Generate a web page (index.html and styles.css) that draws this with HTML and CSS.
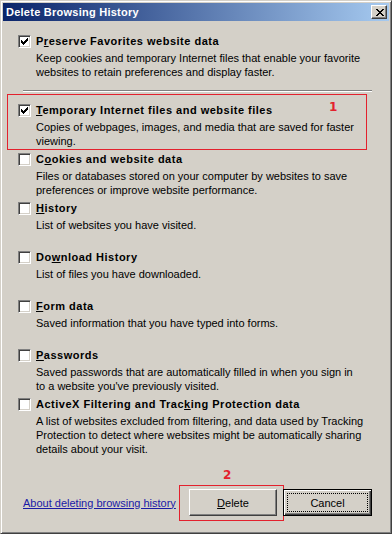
FILE: index.html
```html
<!DOCTYPE html>
<html lang="en">
<head>
  <meta charset="UTF-8">
  <title>Delete Browsing History</title>
  <link rel="stylesheet" href="styles.css">
</head>
<body>
  <div class="window">
    <div class="titlebar">
      <span class="title">Delete Browsing History</span>
      <span class="close-btn">
        <svg width="8" height="7" viewBox="0 0 8 7" shape-rendering="crispEdges">
          <path d="M0 0h2v1h-2zM6 0h2v1h-2zM1 1h2v1h-2zM5 1h2v1h-2zM2 2h4v1h-4zM3 3h2v1h-2zM2 4h4v1h-4zM1 5h2v1h-2zM5 5h2v1h-2zM0 6h2v1h-2zM6 6h2v1h-2z" fill="#000"/>
        </svg>
      </span>
    </div>

    <div class="content">
      <div class="item first">
        <span class="checkbox"><svg class="check" width="7" height="7" viewBox="0 0 7 7" shape-rendering="crispEdges"><path d="M6 0h1v3h-1v1h-1v1h-1v1h-1v1h-1v-1h-1v-1h-1v-3h1v1h1v1h1v-1h1v-1h1v-1h1z" fill="#000"/></svg></span>
        <div class="text">
          <div class="label">P<u>r</u>eserve Favorites website data</div>
          <div class="desc">Keep cookies and temporary Internet files that enable your favorite<br>websites to retain preferences and display faster.</div>
        </div>
      </div>

      <div class="separator"></div>

      <div class="item">
        <span class="checkbox"><svg class="check" width="7" height="7" viewBox="0 0 7 7" shape-rendering="crispEdges"><path d="M6 0h1v3h-1v1h-1v1h-1v1h-1v1h-1v-1h-1v-1h-1v-3h1v1h1v1h1v-1h1v-1h1v-1h1z" fill="#000"/></svg></span>
        <div class="text">
          <div class="label"><u>T</u>emporary Internet files and website files</div>
          <div class="desc">Copies of webpages, images, and media that are saved for faster<br>viewing.</div>
        </div>
        <span class="mark-box box-1"></span>
        <span class="mark-num num-1">1</span>
      </div>

      <div class="item">
        <span class="checkbox"></span>
        <div class="text">
          <div class="label">C<u>o</u>okies and website data</div>
          <div class="desc">Files or databases stored on your computer by websites to save<br>preferences or improve website performance.</div>
        </div>
      </div>

      <div class="item">
        <span class="checkbox"></span>
        <div class="text">
          <div class="label"><u>H</u>istory</div>
          <div class="desc">List of websites you have visited.</div>
        </div>
      </div>

      <div class="item">
        <span class="checkbox"></span>
        <div class="text">
          <div class="label">Do<u>w</u>nload History</div>
          <div class="desc">List of files you have downloaded.</div>
        </div>
      </div>

      <div class="item">
        <span class="checkbox"></span>
        <div class="text">
          <div class="label"><u>F</u>orm data</div>
          <div class="desc">Saved information that you have typed into forms.</div>
        </div>
      </div>

      <div class="item">
        <span class="checkbox"></span>
        <div class="text">
          <div class="label"><u>P</u>asswords</div>
          <div class="desc">Saved passwords that are automatically filled in when you sign in<br>to a website you've previously visited.</div>
        </div>
      </div>

      <div class="item last">
        <span class="checkbox"></span>
        <div class="text">
          <div class="label">ActiveX Filtering and Trac<u>k</u>ing Protection data</div>
          <div class="desc">A list of websites excluded from filtering, and data used by Tracking<br>Protection to detect where websites might be automatically sharing<br>details about your visit.</div>
        </div>
      </div>

      <div class="footer">
        <a class="help-link" href="#">About deleting browsing history</a>
        <span class="mark-wrap">
          <button class="btn"><u>D</u>elete</button>
          <span class="mark-box box-2"></span>
          <span class="mark-num num-2">2</span>
        </span>
        <button class="btn default">Cancel</button>
      </div>
    </div>
  </div>
</body>
</html>
```

FILE: styles.css
```css
* {
  box-sizing: border-box;
}

body {
  margin: 0;
  font-family: Tahoma, 'Liberation Sans', Arial, sans-serif;
  font-size: 11px;
  color: #000;
  background-color: #d4d0c8;
}

.window {
  height: 534px;
  display: flex;
  flex-direction: column;
  padding: 2px;
  border: 1px solid;
  border-color: #d4d0c8 #404040 #404040 #d4d0c8;
  box-shadow: inset 1px 1px #fff, inset -1px -1px #808080;
  background-color: #d4d0c8;
}

.titlebar {
  height: 18px;
  display: flex;
  align-items: center;
  justify-content: space-between;
  padding: 0 2px 0 3px;
  background: linear-gradient(to right, #0a246a, #a6caf0);
  color: white;
  font-weight: bold;
  letter-spacing: 0.25px;
}

.close-btn {
  width: 16px;
  height: 14px;
  display: flex;
  align-items: center;
  justify-content: center;
  padding-left: 1px;
  background-color: #d4d0c8;
  border: 1px solid;
  border-color: #fff #404040 #404040 #fff;
  box-shadow: inset -1px -1px #808080;
}

.content {
  flex: 1;
  display: flex;
  flex-direction: column;
  padding: 13px 17px 15px 15px;
}

.item {
  display: flex;
  gap: 5px;
  height: 49px;
  position: relative;
}

.item.first,
.item.last {
  height: auto;
}

.checkbox {
  width: 13px;
  height: 13px;
  flex-shrink: 0;
  margin-top: 1px;
  display: flex;
  align-items: center;
  justify-content: center;
  background-color: white;
  border: 1px solid;
  border-color: #808080 #fff #fff #808080;
  box-shadow: inset 1px 1px #404040, inset -1px -1px #d4d0c8;
}

.label {
  font-weight: bold;
  line-height: 14px;
  letter-spacing: 0.5px;
  white-space: nowrap;
}

.desc {
  margin-top: 3px;
  line-height: 14px;
  white-space: nowrap;
}

u {
  text-underline-offset: 1px;
}

.separator {
  height: 2px;
  margin: 11px 0 11px 5px;
  border-top: 1px solid #808080;
  border-bottom: 1px solid #fff;
}

.footer {
  margin-top: auto;
  display: flex;
  align-items: center;
  gap: 6px;
}

.help-link {
  margin-left: 5px;
  margin-right: auto;
  color: #1a1aa6;
  text-decoration: underline;
}

.mark-wrap {
  position: relative;
  display: flex;
}

.btn {
  width: 88px;
  height: 27px;
  padding: 0;
  font: inherit;
  color: #000;
  background-color: #d4d0c8;
  border: 1px solid;
  border-color: #fff #404040 #404040 #fff;
  box-shadow: inset -1px -1px #808080;
  position: relative;
}

.btn.default {
  width: 89px;
  border-color: #000;
  box-shadow: inset 1px 1px #fff, inset -1px -1px #404040, inset -2px -2px #808080;
}

.btn.default::after {
  content: '';
  position: absolute;
  inset: 3px;
  border: 1px dotted #000;
}

.mark-box {
  position: absolute;
  border: 1px solid #e3212d;
  pointer-events: none;
}

.box-1 {
  left: -11px;
  top: -9px;
  width: 360px;
  height: 56px;
}

.box-2 {
  left: -10px;
  top: -4px;
  width: 105px;
  height: 36px;
}

.mark-num {
  position: absolute;
  color: #e3212d;
  font-family: 'DejaVu Sans', sans-serif;
  font-weight: bold;
  font-size: 12px;
  line-height: 12px;
}

.num-1 {
  left: 311px;
  top: -2px;
}

.num-2 {
  left: 34px;
  top: -20px;
}
```
